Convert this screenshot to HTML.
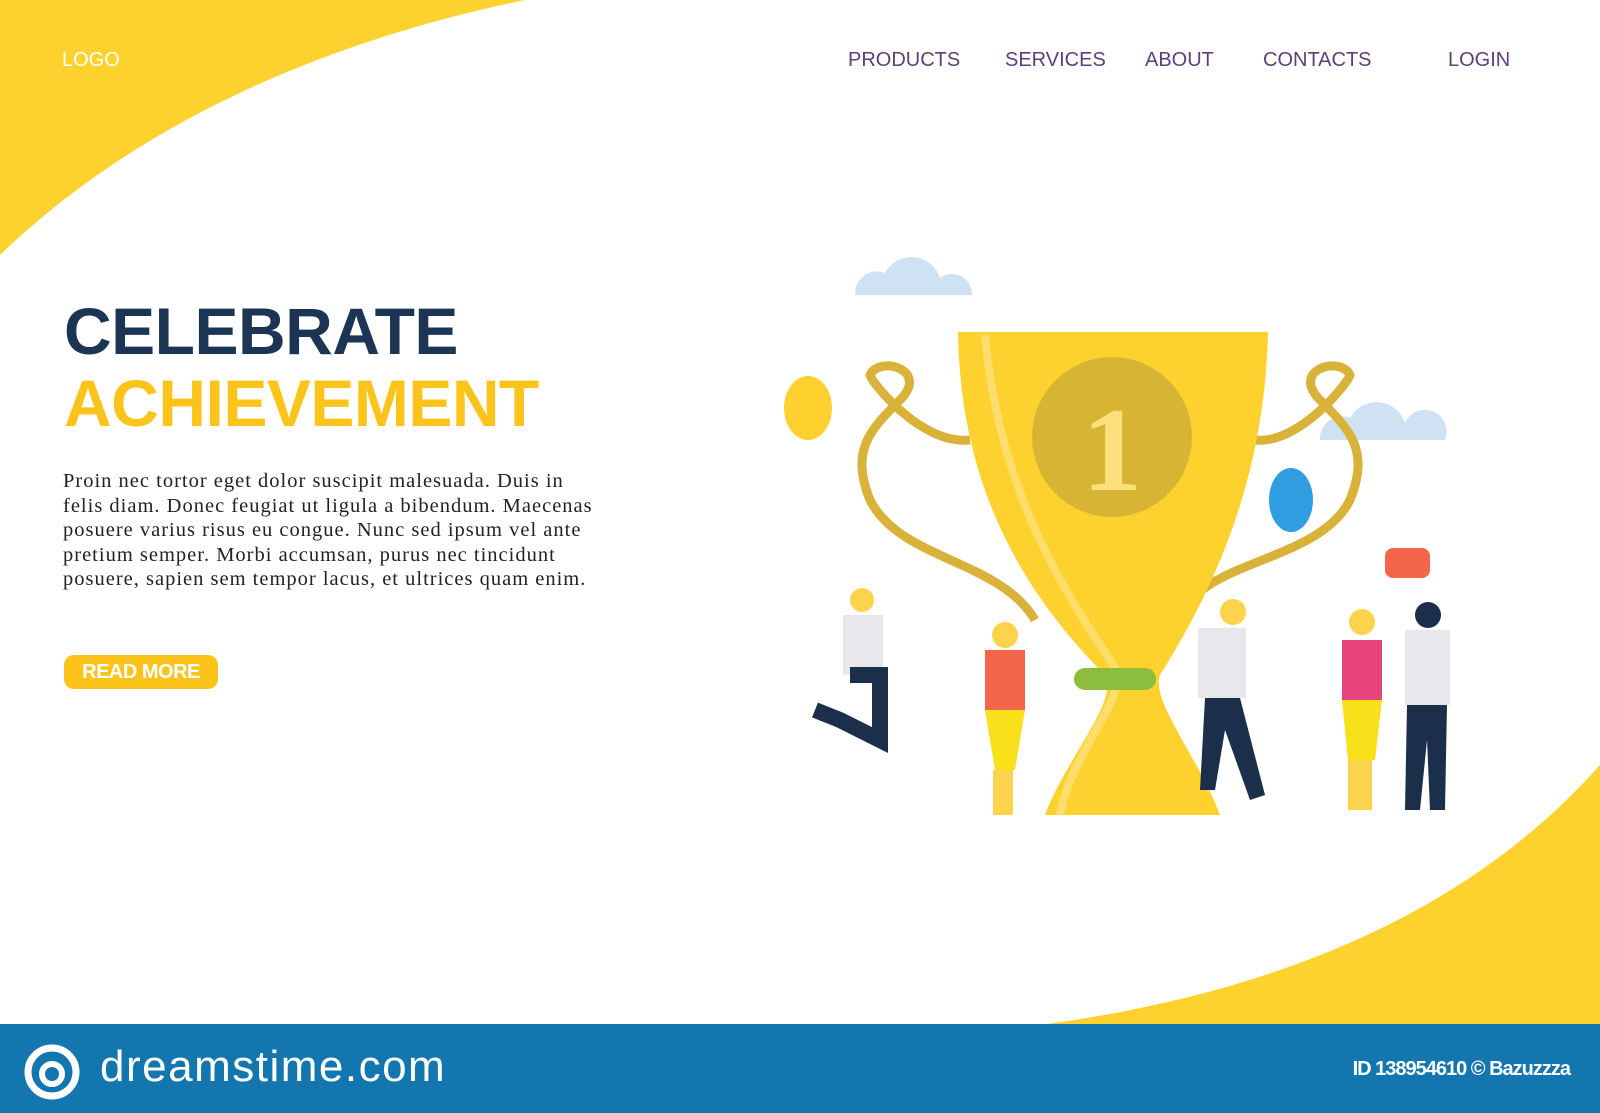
<!DOCTYPE html>
<html><head><style>
html,body{margin:0;padding:0}
body{width:1600px;height:1113px;position:relative;overflow:hidden;background:#fff;font-family:"Liberation Sans",sans-serif}
.nav{position:absolute;top:49px;font-size:20px;color:#5e3f78}
h1{position:absolute;left:64px;margin:0;font-size:66px;font-weight:bold;letter-spacing:-0.5px;line-height:1}
p{position:absolute;left:63px;top:469px;margin:0;white-space:nowrap;font-family:"Liberation Serif",serif;font-size:20.5px;letter-spacing:1px;line-height:24.6px;color:#222}
.btn{position:absolute;left:64px;top:655px;width:154px;height:34px;border-radius:10px;background:#fcc31b;color:#fff;font-weight:bold;font-size:20px;text-align:center;line-height:34px;letter-spacing:-0.5px}
.foot{position:absolute;left:0;top:1024px;width:1600px;height:89px;background:#1376ae;color:#fff}
</style></head><body>
<svg width="1600" height="1113" style="position:absolute;left:0;top:0">
<path d="M0 0 L525 0 C330 40 140 120 0 255 Z" fill="#fdd22e"/>
<path d="M1600 765 C1480 900 1300 990 1040 1025 L1600 1025 Z" fill="#fdd22e"/>
<path d="M855 295 a22 22 0 0 1 30 -22 a30 30 0 0 1 55 5 a20 20 0 0 1 32 17 Z" fill="#cfe2f3"/>
<path d="M1320 440 a22 22 0 0 1 30 -22 a30 30 0 0 1 55 5 a20 20 0 0 1 40 17 Z" fill="#cfe2f3"/>
<path d="M970 440 C920 445 870 380 870 375 C880 355 930 370 900 400 C870 430 850 450 870 500 C900 560 1000 560 1035 620" fill="none" stroke="#d9b23a" stroke-width="9"/>
<path d="M1255 440 C1300 445 1350 380 1350 375 C1340 355 1290 370 1320 400 C1350 430 1370 450 1350 500 C1320 560 1210 560 1185 610" fill="none" stroke="#d9b23a" stroke-width="9"/>
<path d="M958 332 L1268 332 C1265 470 1220 580 1160 675 C1150 700 1200 760 1220 815 L1045 815 C1065 760 1120 700 1105 675 C1010 580 960 470 958 332 Z" fill="#fdd22e"/>
<path d="M985 335 C1000 500 1070 600 1120 675 C1110 720 1070 760 1060 815" fill="none" stroke="#fde07a" stroke-width="8" opacity=".8"/>
<circle cx="1112" cy="437" r="80" fill="#d8b434"/>
<text x="1112" y="490" text-anchor="middle" font-family="Liberation Serif" font-weight="bold" font-size="120" fill="#fce07e">1</text>
<rect x="1074" y="668" width="82" height="22" rx="11" fill="#8cbd3c"/>
<ellipse cx="808" cy="408" rx="24" ry="32" fill="#fdd22e"/>
<ellipse cx="1291" cy="500" rx="22" ry="32" fill="#2f9de0"/>
<g>
<circle cx="862" cy="600" r="12" fill="#fcd34d"/><rect x="843" y="615" width="40" height="60" fill="#e8e8ec"/><path d="M850 675 L880 675 L880 740 L840 720 L815 710" fill="none" stroke="#1c2f4a" stroke-width="16"/>
<circle cx="1005" cy="635" r="13" fill="#fcd34d"/><rect x="985" y="650" width="40" height="60" fill="#f3664a"/><path d="M985 710 L1025 710 L1015 770 L995 770 Z" fill="#f8e01a"/><rect x="993" y="770" width="20" height="45" fill="#fcd34d"/>
<circle cx="1233" cy="612" r="13" fill="#fcd34d"/><rect x="1198" y="628" width="48" height="70" fill="#e8e8ec"/><path d="M1205 698 L1240 698 L1265 795 L1250 800 L1225 730 L1215 790 L1200 790 Z" fill="#1c2f4a"/>
<circle cx="1362" cy="622" r="13" fill="#fcd34d"/><rect x="1342" y="640" width="40" height="60" fill="#e9457c"/><path d="M1342 700 L1382 700 L1375 760 L1348 760 Z" fill="#f8e01a"/><rect x="1348" y="760" width="24" height="50" fill="#fcd34d"/>
<circle cx="1428" cy="615" r="13" fill="#1c2f4a"/><rect x="1405" y="630" width="45" height="75" fill="#e8e8ec"/><path d="M1407 705 L1447 705 L1445 810 L1430 810 L1427 740 L1420 810 L1405 810 Z" fill="#1c2f4a"/>
<rect x="1385" y="548" width="45" height="30" rx="8" fill="#f3664a"/>
</g>
</svg>
<div class="nav" style="left:62px;color:#fff;font-size:20px">LOGO</div>
<div class="nav" style="left:848px">PRODUCTS</div>
<div class="nav" style="left:1005px">SERVICES</div>
<div class="nav" style="left:1145px">ABOUT</div>
<div class="nav" style="left:1263px">CONTACTS</div>
<div class="nav" style="left:1448px">LOGIN</div>
<h1 style="top:298px;color:#1c3554">CELEBRATE</h1>
<h1 style="top:370px;color:#fcc31b">ACHIEVEMENT</h1>
<p>Proin nec tortor eget dolor suscipit malesuada. Duis in<br>felis diam. Donec feugiat ut ligula a bibendum. Maecenas<br>posuere varius risus eu congue. Nunc sed ipsum vel ante<br>pretium semper. Morbi accumsan, purus nec tincidunt<br>posuere, sapien sem tempor lacus, et ultrices quam enim.</p>
<div class="btn">READ MORE</div>
<div class="foot">
<svg width="60" height="60" style="position:absolute;left:22px;top:18px"><circle cx="30" cy="30" r="24" fill="none" stroke="#fff" stroke-width="7"/><circle cx="30" cy="32" r="10" fill="none" stroke="#fff" stroke-width="6"/></svg>
<div style="position:absolute;left:100px;top:18px;font-size:44px;letter-spacing:1.5px">dreamstime.com</div>
<div style="position:absolute;right:30px;top:34px;font-size:20px;font-weight:bold;letter-spacing:-1px">ID 138954610 © Bazuzzza</div>
</div>
</body></html>
